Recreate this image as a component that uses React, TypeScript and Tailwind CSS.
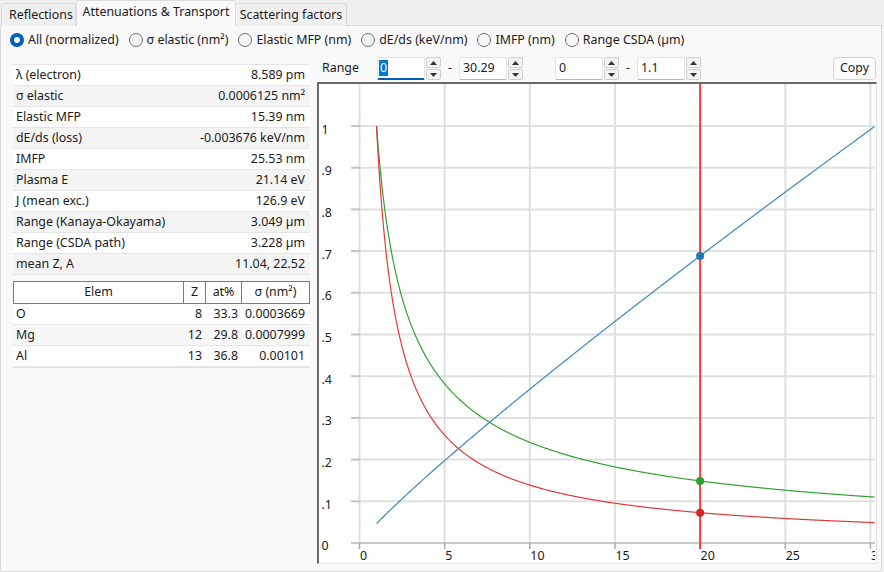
import React from 'react';

const props: [string, string][] = [
  ['λ (electron)', '8.589 pm'],
  ['σ elastic', '0.0006125 nm²'],
  ['Elastic MFP', '15.39 nm'],
  ['dE/ds (loss)', '-0.003676 keV/nm'],
  ['IMFP', '25.53 nm'],
  ['Plasma E', '21.14 eV'],
  ['J (mean exc.)', '126.9 eV'],
  ['Range (Kanaya-Okayama)', '3.049 µm'],
  ['Range (CSDA path)', '3.228 µm'],
  ['mean Z, A', '11.04, 22.52'],
];

const elems: [string, string, string, string][] = [
  ['O', '8', '33.3', '0.0003669'],
  ['Mg', '12', '29.8', '0.0007999'],
  ['Al', '13', '36.8', '0.00101'],
];

const radios = ['All (normalized)', 'σ elastic (nm²)', 'Elastic MFP (nm)', 'dE/ds (keV/nm)', 'IMFP (nm)', 'Range CSDA (µm)'];

function Radio({ label, checked }: { label: string; checked?: boolean }) {
  return (
    <div className="flex items-center gap-[4px]">
      {checked ? (
        <div className="w-[14px] h-[14px] rounded-full bg-[#005fb8] flex items-center justify-center">
          <div className="w-[6px] h-[6px] rounded-full bg-white" />
        </div>
      ) : (
        <div className="w-[14px] h-[14px] rounded-full border border-[#6e6e6e] bg-[#f6f6f6]" />
      )}
      <span>{label}</span>
    </div>
  );
}

function Spin() {
  return (
    <div className="flex flex-col w-[15px] h-[23px] gap-[1px]">
      <div className="flex-1 border border-[#cfcfcf] bg-[#f4f4f4] rounded-[2px] flex items-center justify-center">
        <svg width="7" height="4" viewBox="0 0 7 4"><path d="M0 4 L3.5 0 L7 4Z" fill="#333" /></svg>
      </div>
      <div className="flex-1 border border-[#cfcfcf] bg-[#f4f4f4] rounded-[2px] flex items-center justify-center">
        <svg width="7" height="4" viewBox="0 0 7 4"><path d="M0 0 L3.5 4 L7 0Z" fill="#333" /></svg>
      </div>
    </div>
  );
}

function Input({ value, focused }: { value: string; focused?: boolean }) {
  if (focused) {
    return (
      <div className="w-[48px] h-[23px] bg-white border border-[#e3e3e3] border-b-2 border-b-[#005fb8] rounded-[2px] flex items-center pl-[1px]">
        <span className="bg-[#0078d7] text-white px-[1px] leading-[16px]">{value}</span>
      </div>
    );
  }
  return (
    <div className="w-[48px] h-[23px] bg-white border border-[#e3e3e3] border-b-[#b5b5b5] rounded-[2px] flex items-center pl-[3px]">
      {value}
    </div>
  );
}

function Chart() {
  const X = (v: number) => 40.5 + v * 17.03;
  const Y = (v: number) => 459 - v * 417;
  const pts = (f: (v: number) => number) => {
    let s = '';
    for (let v = 1; v <= 30.3; v += 0.05) s += `${X(v).toFixed(2)},${Y(f(v)).toFixed(2)} `;
    return s;
  };
  const blue = (v: number) => Math.pow(v / 30.29, 0.9);
  const red = (v: number) => Math.pow(v, -(0.8 + 0.025 * Math.log(v)));
  const green = (v: number) => Math.pow(v, -(0.555 + 0.027 * Math.log(v)));
  const xs = [0, 5, 10, 15, 20, 25, 30];
  const ys = [1, 0.9, 0.8, 0.7, 0.6, 0.5, 0.4, 0.3, 0.2, 0.1];
  const ylab = ['1', '.9', '.8', '.7', '.6', '.5', '.4', '.3', '.2', '.1'];
  return (
    <svg width="556" height="478" className="block" style={{ fontFamily: 'Noto Sans, sans-serif', fontSize: 12.4 }}>
      {xs.map((v) => (
        <line key={'v' + v} x1={X(v)} x2={X(v)} y1={0} y2={459} stroke="#e0e0e0" strokeWidth={2} />
      ))}
      {ys.map((v) => (
        <line key={'h' + v} x1={40} x2={556} y1={Y(v)} y2={Y(v)} stroke="#e0e0e0" strokeWidth={2} />
      ))}
      {ys.map((v) => (
        <line key={'t' + v} x1={32} x2={41} y1={Y(v)} y2={Y(v)} stroke="#c4c4c4" strokeWidth={2} />
      ))}
      <line x1={32} x2={556} y1={459} y2={459} stroke="#c8c8c8" strokeWidth={2} />
      {xs.map((v) => (
        <line key={'xt' + v} x1={X(v)} x2={X(v)} y1={459} y2={465} stroke="#a8a8a8" strokeWidth={1.5} />
      ))}
      {ys.map((v, i) => (
        <text key={'yl' + v} x={2.5} y={Y(v) + 7.5} fill="#1a1a1a">{ylab[i]}</text>
      ))}
      <text x={2.5} y={466} fill="#1a1a1a">0</text>
      {xs.map((v) => (
        <text key={'xl' + v} x={X(v) + 0.5} y={476} fill="#1a1a1a">{v}</text>
      ))}
      <line x1={X(20)} x2={X(20)} y1={0} y2={465} stroke="#ff3c3c" strokeWidth={2} />
      <polyline points={pts(blue)} fill="none" stroke="#3b86c6" strokeWidth={1.2} />
      <polyline points={pts(green)} fill="none" stroke="#35a035" strokeWidth={1.2} />
      <polyline points={pts(red)} fill="none" stroke="#e03a3a" strokeWidth={1.2} />
      <circle cx={X(20)} cy={Y(blue(20))} r={4} fill="#1f77b4" />
      <circle cx={X(20)} cy={Y(green(20))} r={4} fill="#2ca02c" />
      <circle cx={X(20)} cy={Y(red(20))} r={4} fill="#d62728" />
    </svg>
  );
}

export default function App() {
  return (
    <div className="w-[884px] h-[572px] bg-[#f0f0f0] flex flex-col font-['Noto_Sans',sans-serif] text-[12.4px] text-[#1b1b1b] overflow-hidden">
      {/* tabs */}
      <div className="h-[25px] flex items-end relative z-10">
        <div className="h-[23px] w-[75px] ml-[1px] border border-b-0 border-[#dcdcdc] bg-[#f0f0f0] rounded-t-[3px] flex items-center pl-[7px] mb-[-1px]">Reflections</div>
        <div className="h-[26px] w-[160px] border border-b-0 border-[#dcdcdc] bg-[#f9f9f9] rounded-t-[3px] flex items-center justify-center pb-[3px] mb-[-1px]">Attenuations &amp; Transport</div>
        <div className="h-[23px] w-[111px] border border-b-0 border-l-0 border-[#dcdcdc] bg-[#f0f0f0] rounded-t-[3px] flex items-center justify-center mb-[-1px]">Scattering factors</div>
      </div>
      {/* panel */}
      <div className="flex-1 flex flex-col border border-[#dadada] bg-[#f9f9f9] mr-[2px] rounded-b-[3px]">
        <div className="h-[29px] flex items-center gap-[10px] pl-[9px]">
          {radios.map((r, i) => (
            <Radio key={r} label={r} checked={i === 0} />
          ))}
        </div>
        <div className="flex-1 flex">
          {/* left */}
          <div className="w-[316px] pl-[12px] pt-[9px] flex flex-col">
            <div className="w-[297px] border-t border-[#e6e6e6]">
              {props.map(([k, v], i) => (
                <div key={k} className={`h-[21px] flex items-center justify-between px-[3px] pr-[5px] border-b border-[#e6e6e6] ${i % 2 === 0 ? 'bg-white' : 'bg-[#f4f4f4]'}`}>
                  <span>{k}</span>
                  <span>{v}</span>
                </div>
              ))}
            </div>
            <div className="w-[297px] mt-[6px] shadow-[0_1px_0_#e2e2e2]">
              <div className="h-[23px] flex bg-white border border-[#7a7a7a]">
                <div className="w-[170px] flex items-center justify-center border-r border-[#7a7a7a]">Elem</div>
                <div className="w-[22px] flex items-center justify-center border-r border-[#7a7a7a]">Z</div>
                <div className="w-[36px] flex items-center justify-center border-r border-[#7a7a7a]">at%</div>
                <div className="flex-1 flex items-center justify-center">σ (nm²)</div>
              </div>
              {elems.map(([e, z, a, s], i) => (
                <div key={e} className={`h-[21px] flex items-center border-b border-[#e6e6e6] ${i % 2 === 0 ? 'bg-white' : 'bg-[#f7f7f7]'}`}>
                  <div className="w-[171px] pl-[3px]">{e}</div>
                  <div className="w-[22px] text-right pr-[4px]">{z}</div>
                  <div className="w-[36px] text-right pr-[4px]">{a}</div>
                  <div className="flex-1 text-right pr-[5px]">{s}</div>
                </div>
              ))}
            </div>
          </div>
          {/* right */}
          <div className="flex-1 flex flex-col pb-[7px]">
            <div className="h-[27px] flex items-center">
              <div className="w-[60px] pl-[5px]">Range</div>
              <div className="flex items-center gap-[1px]">
                <Input value="0" focused />
                <Spin />
              </div>
              <div className="w-[18px] text-center">-</div>
              <div className="flex items-center gap-[1px]">
                <Input value="30.29" />
                <Spin />
              </div>
              <div className="flex items-center gap-[1px] ml-[32px]">
                <Input value="0" />
                <Spin />
              </div>
              <div className="w-[18px] text-center">-</div>
              <div className="flex items-center gap-[1px]">
                <Input value="1.1" />
                <Spin />
              </div>
              <div className="ml-auto mr-[5px] h-[23px] px-[6px] border border-[#d3d3d3] bg-[#fdfdfd] rounded-[4px] flex items-center">Copy</div>
            </div>
            <div className="flex-1 mr-[4px] bg-white border-t-2 border-l-2 border-[#6a6a6a] border-r border-b border-r-[#e2e2e2] border-b-[#e2e2e2] overflow-hidden">
              <Chart />
            </div>
          </div>
        </div>
      </div>
    </div>
  );
}
